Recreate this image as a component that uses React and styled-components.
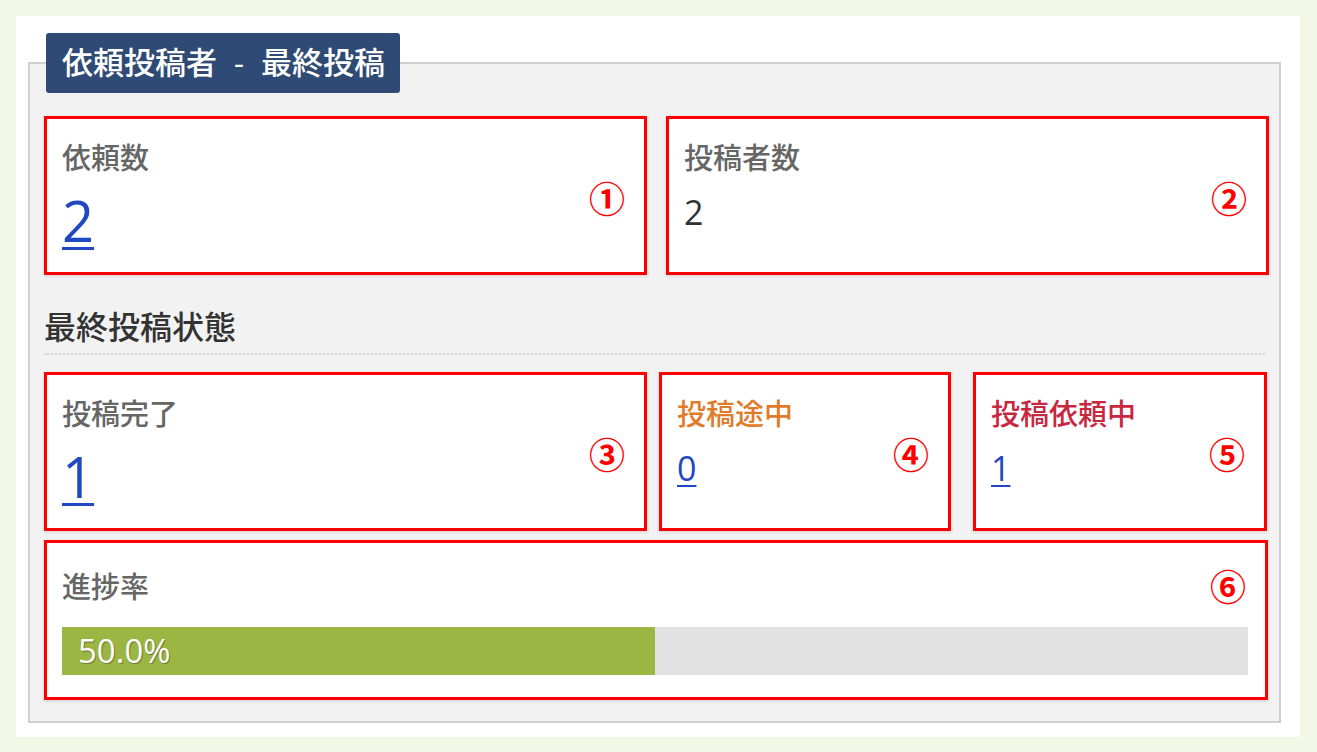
import React from 'react'
import styled, { createGlobalStyle } from 'styled-components'

const GlobalStyle = createGlobalStyle`
  html, body {
    margin: 0;
    padding: 0;
    background: #f3f8e6;
  }
  body {
    font-family: "Open Sans", "Noto Sans CJK JP", sans-serif;
  }
`

const Page = styled.div`
  padding: 16px 17px 15px 16px;
`

const Panel = styled.div`
  background: #fff;
  padding: 17px 19px 14px 12px;
`

const Box = styled.fieldset`
  margin: 0;
  border: 2px solid #cfcfcf;
  background: #f2f2f2;
  padding: 0 11px 21px 14px;
  min-width: 0;
`

const Legend = styled.legend`
  margin-left: 2px;
  padding: 0 15px 0 16px;
  height: 60px;
  line-height: 58px;
  background: #2f4a74;
  border-radius: 3px;
  color: #fff;
  font-size: 31px;
  font-weight: 500;
  word-spacing: 9px;
  white-space: nowrap;
`

const Row = styled.div`
  display: flex;
  gap: ${p => p.$gap || 19}px;
  margin-top: ${p => p.$top || 0}px;
`

const Card = styled.div`
  position: relative;
  box-sizing: border-box;
  width: ${p => p.$w}px;
  height: ${p => p.$h || 159}px;
  margin-left: ${p => p.$ml || 0}px;
  flex: ${p => (p.$w ? 'none' : '1')};
  background: #fff;
  border: 3px solid #ff0000;
  box-shadow: 0 1px 3px rgba(0, 0, 0, 0.15);
  padding: ${p => p.$pt || 20}px 15px 0 15px;
`

const Label = styled.div`
  font-size: 29px;
  line-height: 38px;
  font-weight: 500;
  color: ${p => p.$color || '#666'};
`

const BigLink = styled.a`
  display: inline-block;
  margin-top: 10px;
  font-size: 56px;
  line-height: 66px;
  color: #2148c0;
  text-decoration: underline;
  text-decoration-thickness: 3px;
  text-underline-offset: 5px;
`

const SmallLink = styled.a`
  display: inline-block;
  margin-top: 13px;
  font-size: 34px;
  line-height: 44px;
  color: #2148c0;
  text-decoration: underline;
  text-decoration-thickness: 2px;
  text-underline-offset: 4px;
`

const Plain = styled.div`
  margin-top: 13px;
  font-size: 34px;
  line-height: 44px;
  color: #333;
`

const Mark = styled.span`
  position: absolute;
  right: ${p => p.$right || 19}px;
  top: ${p => p.$top || 58}px;
  font-family: "Noto Sans CJK JP", sans-serif;
  font-size: 36px;
  font-weight: 700;
  line-height: 40px;
  color: #ff0000;
`

const Heading = styled.h3`
  margin: 0;
  margin-top: 31px;
  margin-right: 3px;
  font-size: 32px;
  font-weight: 500;
  line-height: 42px;
  color: #333;
  padding-bottom: 5px;
  border-bottom: 2px dotted #d4d4d4;
`

const Bar = styled.div`
  margin-top: 21px;
  margin-right: 2px;
  height: 48px;
  background: #e2e2e2;
`

const Fill = styled.div`
  height: 100%;
  background: #9cb644;
  color: #fff;
  font-size: 33px;
  line-height: 48px;
  padding-left: 16px;
  box-sizing: border-box;
  text-shadow: 1px 1px 1px rgba(0, 0, 0, 0.35);
  white-space: nowrap;
`

export default function App() {
  const rate = 50.0
  return (
    <Page>
      <GlobalStyle />
      <Panel>
        <Box>
          <Legend>依頼投稿者 - 最終投稿</Legend>
          <Row $top={23}>
            <Card $w={603}>
              <Label>依頼数</Label>
              <BigLink href="#">2</BigLink>
              <Mark>①</Mark>
            </Card>
            <Card $w={603}>
              <Label>投稿者数</Label>
              <Plain>2</Plain>
              <Mark>②</Mark>
            </Card>
          </Row>
          <Heading>最終投稿状態</Heading>
          <Row $gap={12} $top={17}>
            <Card $w={603}>
              <Label>投稿完了</Label>
              <BigLink href="#">1</BigLink>
              <Mark>③</Mark>
            </Card>
            <Card $w={292}>
              <Label $color="#e07b2a">投稿途中</Label>
              <SmallLink href="#">0</SmallLink>
              <Mark>④</Mark>
            </Card>
            <Card $w={294} $ml={10}>
              <Label $color="#c8283f">投稿依頼中</Label>
              <SmallLink href="#">1</SmallLink>
              <Mark>⑤</Mark>
            </Card>
          </Row>
          <Row $top={9}>
            <Card $h={160} $pt={25}>
              <Label>進捗率</Label>
              <Bar>
                <Fill style={{ width: `${rate}%` }}>{rate.toFixed(1)}%</Fill>
              </Bar>
              <Mark $top={22}>⑥</Mark>
            </Card>
          </Row>
        </Box>
      </Panel>
    </Page>
  )
}
